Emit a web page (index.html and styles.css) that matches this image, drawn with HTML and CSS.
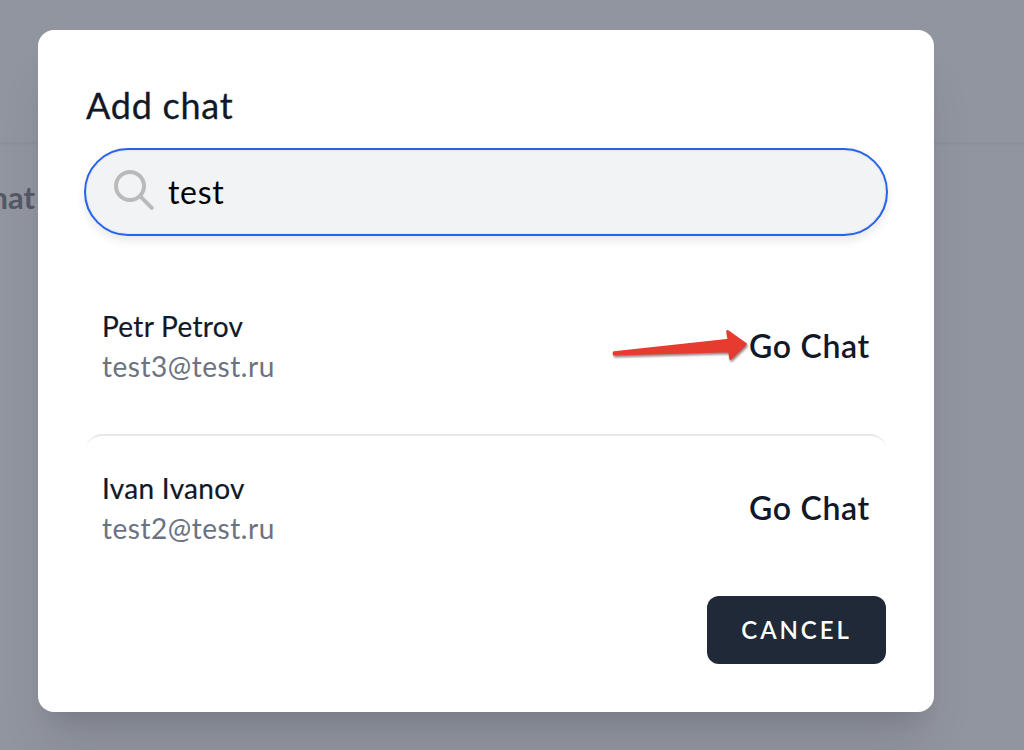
FILE: index.html
```html
<!DOCTYPE html>
<html lang="en">
<head>
<meta charset="utf-8">
<title>Add chat</title>
<link rel="stylesheet" href="styles.css">
</head>
<body>
<div class="page">
  <div class="page-head"></div>
  <div class="page-label"><span>Chat</span></div>
</div>
<div class="overlay">
  <section class="modal">
    <h1 class="title">Add chat</h1>
    <div class="search">
      <svg class="search-icon" width="44" height="44" viewBox="0 0 44 44" fill="none" stroke="#bababa" stroke-width="4" stroke-linecap="round"><circle cx="18" cy="16" r="14"/><path d="M28.3 26.3 39.8 37.8"/></svg>
      <span class="query">test</span>
    </div>
    <ul class="results">
      <li class="row">
        <div><div class="name">Petr Petrov</div><div class="mail">test3@test.ru</div></div>
        <a class="go">Go Chat</a>
        <svg class="arrow" width="142" height="42" viewBox="0 0 142 42"><path d="M5 28.5 120 16 118.5 7.2 136.5 20 121.5 34.5 120.5 27 5 30.3Z" fill="#e63c2f" stroke="#e63c2f" stroke-width="2.6" stroke-linejoin="round"/></svg>
      </li>
      <li class="row divided">
        <div><div class="name">Ivan Ivanov</div><div class="mail">test2@test.ru</div></div>
        <a class="go">Go Chat</a>
      </li>
    </ul>
    <button class="cancel">CANCEL</button>
  </section>
</div>
</body>
</html>
```
FILE: styles.css
```css
* { box-sizing: border-box; }
body { margin: 0; width: 1024px; height: 750px; overflow: hidden; position: relative; font-family: Lato, sans-serif; background: #9195a0; color: #111827; }
.page-head { height: 142px; box-shadow: 0 2px 3px rgba(0,0,0,.05); }
.page-label { width: 35px; height: 110px; display: flex; align-items: center; justify-content: flex-end; font: 700 31px/40px Lato, sans-serif; color: #555965; overflow: hidden; }
.overlay { position: absolute; inset: 0; padding: 30px 0 0 38px; }
.modal { width: 896px; height: 682px; padding: 48px; background: #fff; border-radius: 16px; box-shadow: 0 40px 50px -10px rgba(0,0,0,.1), 0 16px 20px -12px rgba(0,0,0,.1); }
.title { margin: 0; height: 70px; font-size: 36px; line-height: 54px; font-weight: 400; letter-spacing: .75px; -webkit-text-stroke: .3px currentColor; }
.search { height: 88px; margin: 0 -2px; padding-left: 26px; display: flex; align-items: center; border: 2px solid #2563eb; border-radius: 44px; background: #f2f3f5; box-shadow: 0 5px 10px rgba(0,0,0,.09), inset 0 0 2px rgba(0,0,0,.15); }
.query { margin: -2px 0 0 12px; font-size: 32px; letter-spacing: .7px; color: #000; }
.results { margin: 38px 0 0; padding: 0; list-style: none; }
.row { position: relative; height: 160px; padding: 0 16px; display: flex; align-items: flex-start; justify-content: space-between; }
.row > div { padding-top: 32px; }
.divided { height: 162px; border-top: 2px solid #e5e7eb; border-radius: 16px; }
.name, .mail { font-size: 28px; line-height: 40px; }
.name { letter-spacing: .3px; -webkit-text-stroke: .2px currentColor; }
.mail { letter-spacing: .53px; color: #6b7280; }
.go { margin: 52px 0 0; font-size: 32px; line-height: 40px; font-weight: 600; letter-spacing: .7px; }
.arrow { position: absolute; left: 523px; top: 50px; filter: drop-shadow(1px 2px 1px rgba(60,0,0,.5)); }
.cancel { display: block; width: 179px; height: 68px; margin-left: auto; padding: 0 0 2px; border: 0; border-radius: 12px; color: #fff; background: #1f2937; font: 600 24px Lato, sans-serif; letter-spacing: 2.9px; }
```
